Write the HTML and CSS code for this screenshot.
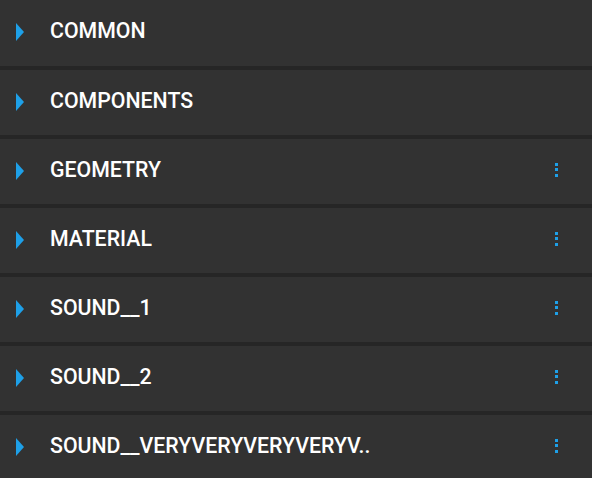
FILE: index.html
```html
<!DOCTYPE html>
<html>
<head>
<meta charset="utf-8">
<link rel="stylesheet" href="styles.css">
</head>
<body>
<div class="list">
  <div class="row first">
    <span class="arrow"></span>
    <span class="label">COMMON</span>
  </div>
  <div class="row">
    <span class="arrow"></span>
    <span class="label">COMPONENTS</span>
  </div>
  <div class="row">
    <span class="arrow"></span>
    <span class="label">GEOMETRY</span>
    <span class="menu"><i></i><i></i><i></i></span>
  </div>
  <div class="row">
    <span class="arrow"></span>
    <span class="label">MATERIAL</span>
    <span class="menu"><i></i><i></i><i></i></span>
  </div>
  <div class="row">
    <span class="arrow"></span>
    <span class="label">SOUND__1</span>
    <span class="menu"><i></i><i></i><i></i></span>
  </div>
  <div class="row">
    <span class="arrow"></span>
    <span class="label">SOUND__2</span>
    <span class="menu"><i></i><i></i><i></i></span>
  </div>
  <div class="row">
    <span class="arrow"></span>
    <span class="label">SOUND__VERYVERYVERYVERYV..</span>
    <span class="menu"><i></i><i></i><i></i></span>
  </div>
</div>
</body>
</html>
```
FILE: styles.css
```css
html, body {
  margin: 0;
  padding: 0;
  background: #262626;
  height: 478px;
  overflow: hidden;
}
.list {
  display: flex;
  flex-direction: column;
  gap: 4px;
}
.row {
  height: 65px;
  background: #323232;
  display: flex;
  align-items: center;
  padding: 0 34px 0 16px;
  font-family: Roboto, "Liberation Sans", sans-serif;
  font-weight: 500;
  font-size: 21.3px;
  color: #ffffff;
}
.row.first {
  height: 66px;
}
.arrow {
  width: 0;
  height: 0;
  border-top: 9.5px solid transparent;
  border-bottom: 9.5px solid transparent;
  border-left: 8px solid #1ea0e8;
  margin-right: 26px;
  margin-top: -2px;
}
.label {
  flex: 1;
  white-space: nowrap;
  margin-top: -5px;
}
.menu {
  display: flex;
  flex-direction: column;
  gap: 2.5px;
  margin-top: -4px;
}
.menu i {
  display: block;
  width: 3px;
  height: 3px;
  background: #1ea0e8;
}
```
